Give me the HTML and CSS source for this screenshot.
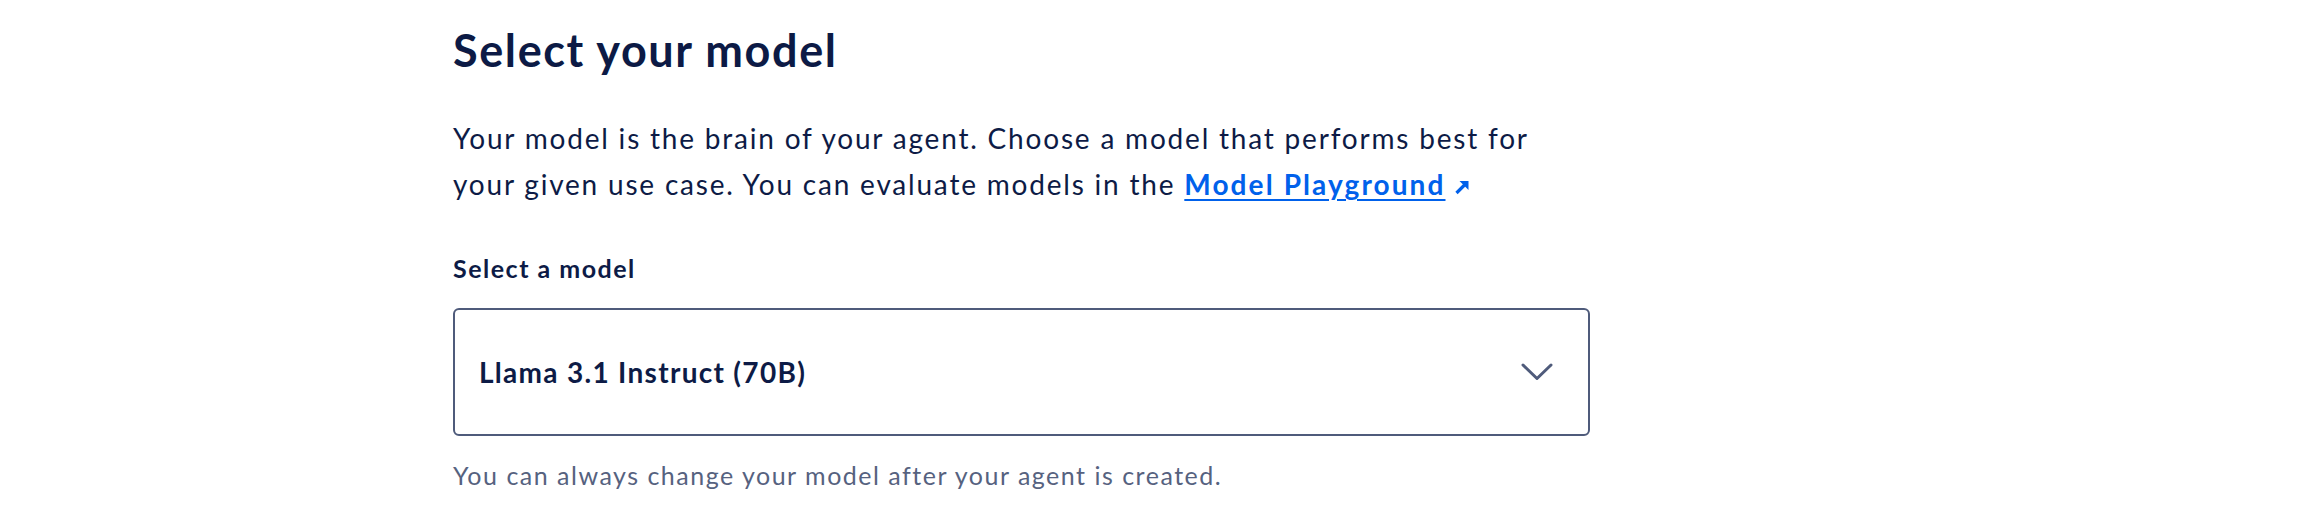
FILE: index.html
```html
<!DOCTYPE html>
<html lang="en">
<head>
<meta charset="utf-8">
<title>Select your model</title>
<link rel="stylesheet" href="styles.css">
</head>
<body>
<main class="page">
  <section class="model-step">
    <h1 class="title">Select your model</h1>
    <p class="intro">Your model is the brain of your agent. Choose a model that performs best for your given use case. You can evaluate models in the <a class="link" href="#">Model Playground</a><svg class="ext" viewBox="0 0 18 18" aria-hidden="true"><path d="M3.5 15 L12 6.5" fill="none" stroke="currentColor" stroke-width="3.2"/><path d="M6.5 3 H15.5 V12 Z" fill="currentColor"/></svg></p>
    <div class="field">
      <label class="label" for="model">Select a model</label>
      <div class="select" id="model" role="button" tabindex="0">
        <span class="value">Llama 3.1 Instruct (70B)</span>
        <svg class="chev" viewBox="0 0 32 18" aria-hidden="true"><path d="M2 2 L16 15.5 L30 2" fill="none" stroke="currentColor" stroke-width="3" stroke-linecap="round" stroke-linejoin="round"/></svg>
      </div>
      <p class="help">You can always change your model after your agent is created.</p>
    </div>
  </section>
</main>
</body>
</html>
```
FILE: styles.css
```css
html, body {
  margin: 0;
  padding: 0;
  background: #ffffff;
}
body {
  font-family: Lato, "Liberation Sans", sans-serif;
  color: #0d1b46;
}
.page {
  padding-left: 453px;
}
.model-step {
  width: 1137px;
  display: flex;
  flex-direction: column;
}
.title {
  margin: 24px 0 0;
  font-size: 45px;
  line-height: 52px;
  font-weight: 700;
  letter-spacing: 1.6px;
  color: #0c1a45;
}
.intro {
  margin: 39px 0 0;
  max-width: 1100px;
  font-size: 28px;
  line-height: 46px;
  font-weight: 400;
  letter-spacing: 1.8px;
  color: #0d1b46;
}
.link {
  color: #0061eb;
  font-weight: 700;
  letter-spacing: 2.1px;
  text-decoration: underline;
  text-decoration-thickness: 2px;
  text-underline-offset: 4px;
}
.ext {
  width: 18px;
  height: 18px;
  margin-left: 7px;
  color: #0061eb;
  vertical-align: -1px;
}
.field {
  margin-top: 45px;
  display: flex;
  flex-direction: column;
}
.label {
  font-size: 25px;
  line-height: 32px;
  font-weight: 700;
  letter-spacing: 1.5px;
  color: #0d1b46;
}
.select {
  margin-top: 24px;
  box-sizing: border-box;
  height: 128px;
  border: 2px solid #4f5b7b;
  border-radius: 6px;
  padding: 0 35px 0 24px;
  display: flex;
  align-items: center;
  justify-content: space-between;
}
.value {
  font-size: 28px;
  font-weight: 700;
  letter-spacing: 1.3px;
  color: #0d1b46;
}
.chev {
  width: 32px;
  height: 18px;
  color: #4f5b7b;
}
.help {
  margin: 23px 0 0;
  font-size: 25px;
  line-height: 32px;
  letter-spacing: 1.5px;
  color: #56627f;
}
```
